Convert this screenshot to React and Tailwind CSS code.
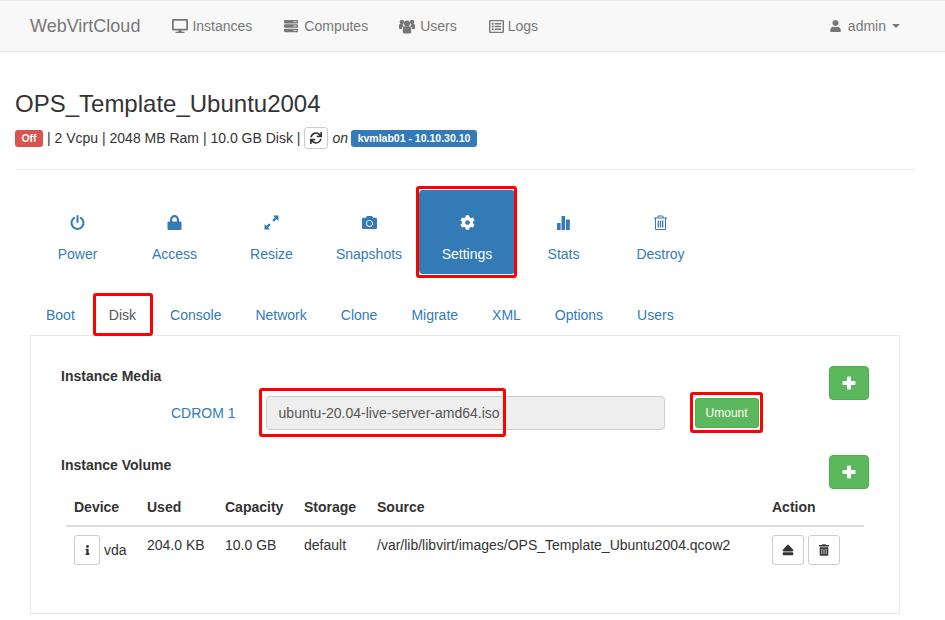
import React from "react";
import {
  FaCamera,
  FaCog,
  FaDesktop,
  FaEject,
  FaInfo,
  FaRegListAlt,
  FaServer,
  FaSync,
  FaTrashAlt,
  FaUser,
} from "react-icons/fa";

const PowerIcon = ({ className }) => (
  <svg viewBox="0 0 15 15" className={className} fill="none" stroke="currentColor" strokeWidth="2" strokeLinecap="round">
    <path d="M4.2 2.9a6 6 0 1 0 6.6 0" />
    <path d="M7.5 1v6" />
  </svg>
);

const LockIcon = ({ className }) => (
  <svg viewBox="0 0 15 15" className={className} fill="currentColor">
    <rect x="0.5" y="6.5" width="14" height="8.5" rx="1.2" />
    <path d="M3 7V4.6a4.5 4.5 0 0 1 9 0V7h-2.2V4.6a2.3 2.3 0 0 0-4.6 0V7z" />
  </svg>
);

const ResizeIcon = ({ className }) => (
  <svg viewBox="0 0 15 15" className={className} fill="currentColor">
    <path d="M9 .5h5.5V6l-1.9-1.9L10 6.7 8.3 5l2.6-2.6z" />
    <path d="M6 14.5H.5V9l1.9 1.9L5 8.3 6.7 10l-2.6 2.6z" />
  </svg>
);

const BarsIcon = ({ className }) => (
  <svg viewBox="0 0 15 15" className={className} fill="currentColor">
    <rect x="1" y="8" width="3.6" height="7" />
    <rect x="5.5" y="1" width="3.6" height="14" />
    <rect x="10" y="4.5" width="3.8" height="10.5" />
  </svg>
);

const TrashOutline = ({ className }) => (
  <svg viewBox="0 0 15 15" className={className} fill="none" stroke="currentColor" strokeWidth="1">
    <path d="M1 3h13" />
    <path d="M5 3V1h5v2" />
    <path d="M2.5 3v11.5h10V3" />
    <path d="M5.3 5.5v7M7.5 5.5v7M9.7 5.5v7" strokeWidth="1.3" />
  </svg>
);

const UsersIcon = ({ className }) => (
  <svg viewBox="0 0 16 15" className={className} fill="currentColor">
    <circle cx="8" cy="4.6" r="3" />
    <circle cx="2.9" cy="3" r="2.2" />
    <circle cx="13.1" cy="3" r="2.2" />
    <path d="M3.8 9.6c0-1.6 1.1-2.4 2.2-2.4h4c1.1 0 2.2.8 2.2 2.4V13c0 .8-.6 1.4-1.4 1.4H5.2c-.8 0-1.4-.6-1.4-1.4z" />
    <path d="M0 6.4c0-.7.6-1.3 1.3-1.3h2.6c-.1 1 .3 1.7 1 2.2-1.3.4-2 1.4-2 2.6H1c-.6 0-1-.4-1-1z" />
    <path d="M16 6.4c0-.7-.6-1.3-1.3-1.3h-2.6c.1 1-.3 1.7-1 2.2 1.3.4 2 1.4 2 2.6H15c.6 0 1-.4 1-1z" />
  </svg>
);

const PlusIcon = ({ className }) => (
  <svg viewBox="0 0 14 14" className={className} fill="currentColor">
    <rect x="0.5" y="5" width="13" height="4" rx="0.8" />
    <rect x="5" y="0.5" width="4" height="13" rx="0.8" />
  </svg>
);

const navLinks = [
  { label: "Instances", Icon: FaDesktop, size: "w-4 h-4", gap: "ml-[4px]", ml: "ml-[32px]" },
  { label: "Computes", Icon: FaServer, size: "w-[14px] h-[14px]", gap: "ml-[6px]", ml: "ml-[32px]" },
  { label: "Users", Icon: UsersIcon, size: "w-4 h-[15px]", gap: "ml-[5px]", ml: "ml-[31px]" },
  { label: "Logs", Icon: FaRegListAlt, size: "w-[15px] h-[15px]", gap: "ml-[4px]", ml: "ml-[32px]" },
];

const actions = [
  { label: "Power", Icon: PowerIcon, width: "w-[97px]" },
  { label: "Access", Icon: LockIcon, width: "w-[97px]" },
  { label: "Resize", Icon: ResizeIcon, width: "w-[97px]" },
  { label: "Snapshots", Icon: FaCamera, width: "w-[98px] mr-px" },
  { label: "Settings", Icon: FaCog, width: "w-[96px]", active: true },
  { label: "Stats", Icon: BarsIcon, width: "w-[97px]" },
  { label: "Destroy", Icon: TrashOutline, width: "w-[97px]" },
];

const tabs = ["Boot", "Disk", "Console", "Network", "Clone", "Migrate", "XML", "Options", "Users"];

const RedBox = ({ className }) => (
  <div className={`absolute border-[#f00] rounded-[3px] pointer-events-none ${className}`}></div>
);

const GreenPlus = () => (
  <button className="w-10 h-[34px] flex items-center justify-center bg-[#5cb85c] border border-[#4cae4c] rounded text-white">
    <PlusIcon className="w-[14px] h-[14px]" />
  </button>
);

const SmallBtn = ({ className, children }) => (
  <button className={`h-[30px] flex items-center justify-center bg-white border border-[#ccc] rounded-[3px] text-[#333] ${className}`}>
    {children}
  </button>
);

export default function App() {
  return (
    <div className="w-[945px] h-[620px] overflow-hidden bg-white text-[14px] leading-5 text-[#333] font-['Liberation_Sans',Arial,sans-serif]">
      {/* navbar */}
      <nav className="h-[52px] flex items-center bg-[#f8f8f8] border-y border-[#e7e7e7] text-[#777]">
        <span className="ml-[30px] text-[18px]">WebVirtCloud</span>
        {navLinks.map(({ label, Icon, size, gap, ml }) => (
          <span key={label} className={`flex items-center ${ml}`}>
            <Icon className={size} />
            <span className={gap}>{label}</span>
          </span>
        ))}
        <span className="ml-auto mr-[45px] flex items-center">
          <FaUser className="w-[11px] h-[12px]" />
          <span className="ml-[7px]">admin</span>
          <span className="ml-[6px] w-0 h-0 border-x-4 border-x-transparent border-t-4 border-t-[#777]"></span>
        </span>
      </nav>

      {/* header */}
      <div className="w-[930px] px-[15px]">
        <h1 className="mt-[39px] text-[24px] leading-[26px] font-normal">OPS_Template_Ubuntu2004</h1>
        <div className="mt-[10px] h-[22px] flex items-center">
          <span className="w-[28px] h-[17px] flex items-center justify-center bg-[#d9534f] text-white text-[10.5px] font-bold rounded-[3px]">Off</span>
          <span className="ml-1 -mt-px">| 2 Vcpu | 2048 MB Ram | 10.0 GB Disk |</span>
          <button className="ml-1 w-6 h-[22px] flex items-center justify-center bg-white border border-[#ccc] rounded-[3px] text-[#333]">
            <FaSync className="w-3 h-3" />
          </button>
          <em className="ml-1 -mt-px">on</em>
          <span className="ml-[3px] w-[126px] h-[17px] flex items-center justify-center bg-[#337ab7] text-white text-[10.5px] font-bold rounded-[3px]">kvmlab01 - 10.10.30.10</span>
        </div>
        <hr className="mt-[20px] border-[#eee]" />
      </div>

      {/* action pills */}
      <div className="mt-[20px] ml-[29px] flex">
        {actions.map(({ label, Icon, active, width }) => (
          <div
            key={label}
            className={`relative h-[84px] flex flex-col items-center pt-[25px] rounded ${width} ${
              active ? "bg-[#337ab7] text-white" : "text-[#337ab7]"
            }`}
          >
            <Icon className="w-[15px] h-[15px]" />
            <span className="mt-[14px]">{label}</span>
            {active && <RedBox className="border-[3px] -left-[3px] -top-[4px] -right-[2px] -bottom-[4px]" />}
          </div>
        ))}
      </div>

      {/* tabs */}
      <div className="mt-[21px] ml-[31px] h-[40px] flex gap-1 text-[#337ab7]">
        {tabs.map((tab) => (
          <div key={tab} className={`relative px-[15px] py-[10px] ${tab === "Disk" ? "text-[#555]" : ""}`}>
            {tab}
            {tab === "Disk" && <RedBox className="border-[3px] -left-[1px] -top-[2px] -right-[2px] -bottom-[1px]" />}
          </div>
        ))}
      </div>

      {/* panel */}
      <div className="ml-[30px] w-[870px] h-[279px] border border-[#e7e7e7] px-[30px] pt-[30px]">
        <div className="flex justify-between items-start">
          <b>Instance Media</b>
          <GreenPlus />
        </div>
        <div className="-mt-1 flex items-center h-[34px]">
          <span className="ml-[110px] text-[#337ab7]">CDROM 1</span>
          <div className="relative ml-[30px] w-[399px] h-[34px] flex items-center px-3 bg-[#eee] border border-[#ccc] rounded text-[#555]">
            ubuntu-20.04-live-server-amd64.iso
            <RedBox className="border-[3px] -left-[8px] -top-[9px] right-[158px] -bottom-[8px]" />
          </div>
          <div className="relative ml-[30px]">
            <button className="w-16 h-[30px] block bg-[#5cb85c] border border-[#4cae4c] rounded-[3px] text-white text-[12px] leading-[18px]">Umount</button>
            <RedBox className="border-[3px] -left-[5px] -top-[6px] -right-[4px] -bottom-[5px]" />
          </div>
        </div>
        <div className="mt-[25px] flex justify-between items-start">
          <b>Instance Volume</b>
          <GreenPlus />
        </div>
        <table className="ml-[5px] w-[798px] table-fixed border-collapse">
          <colgroup>
            <col className="w-[73px]" />
            <col className="w-[78px]" />
            <col className="w-[79px]" />
            <col className="w-[73px]" />
            <col className="w-[395px]" />
            <col className="w-[100px]" />
          </colgroup>
          <thead>
            <tr className="border-b-2 border-[#ddd] text-left">
              <th className="p-2">Device</th>
              <th className="p-2">Used</th>
              <th className="p-2">Capacity</th>
              <th className="p-2">Storage</th>
              <th className="p-2">Source</th>
              <th className="p-2">Action</th>
            </tr>
          </thead>
          <tbody>
            <tr className="align-top">
              <td className="p-2">
                <div className="flex items-center">
                  <SmallBtn className="w-[26px] shrink-0">
                    <FaInfo className="w-[9px] h-[10px]" />
                  </SmallBtn>
                  <span className="ml-1">vda</span>
                </div>
              </td>
              <td className="p-2">204.0 KB</td>
              <td className="p-2">10.0 GB</td>
              <td className="p-2">default</td>
              <td className="p-2 whitespace-nowrap">/var/lib/libvirt/images/OPS_Template_Ubuntu2004.qcow2</td>
              <td className="p-2">
                <div className="flex gap-1">
                  <SmallBtn className="w-8">
                    <FaEject className="w-3 h-3" />
                  </SmallBtn>
                  <SmallBtn className="w-8">
                    <FaTrashAlt className="w-[10px] h-[12px]" />
                  </SmallBtn>
                </div>
              </td>
            </tr>
          </tbody>
        </table>
      </div>
    </div>
  );
}
